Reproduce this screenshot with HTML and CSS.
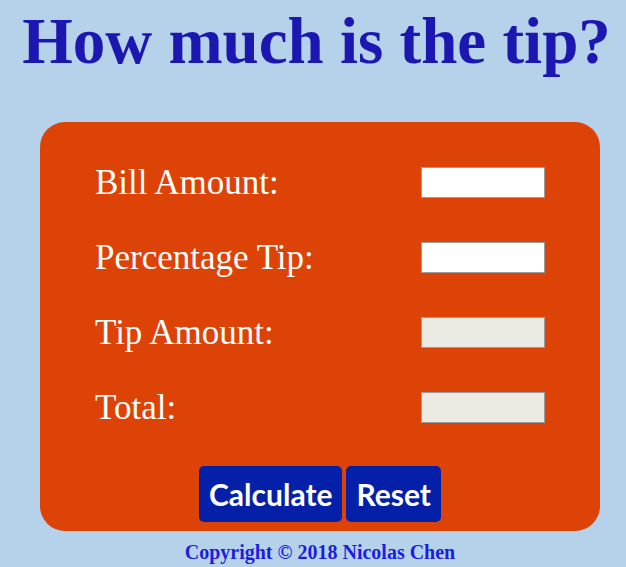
FILE: index.html
```html
<!DOCTYPE html>
<html>
<head>
<meta charset="utf-8">
<title>Tip Calculator</title>
<link rel="stylesheet" href="styles.css">
</head>
<body>
<h1 class="title">How much is the tip?</h1>
<div class="wrap">
  <div class="card">
    <div class="row"><label class="label">Bill Amount:</label><input class="field" type="text"></div>
    <div class="row"><label class="label">Percentage Tip:</label><input class="field" type="text"></div>
    <div class="row"><label class="label">Tip Amount:</label><input class="field field-off" type="text" disabled></div>
    <div class="row"><label class="label">Total:</label><input class="field field-off" type="text" disabled></div>
    <div class="actions">
      <button class="btn">Calculate</button>
      <button class="btn">Reset</button>
    </div>
  </div>
  <p class="copy">Copyright © 2018 Nicolas Chen</p>
</div>
</body>
</html>
```
FILE: styles.css
```css
html, body {
  margin: 0;
  padding: 0;
}
body {
  background: #b5d2ea;
  font-family: "Liberation Serif", "Times New Roman", serif;
  width: 626px;
  height: 567px;
  overflow: hidden;
}
.title {
  margin: 0;
  padding-top: 6px;
  padding-left: 7px;
  font-size: 65px;
  line-height: 70px;
  font-weight: bold;
  color: #1c17b0;
  text-align: center;
  white-space: nowrap;
}
.wrap {
  width: 560px;
  margin: 46px 0 0 40px;
}
.card {
  background: #dd4307;
  border-radius: 25px;
  padding: 23px 55px 9px;
}
.row {
  display: flex;
  justify-content: space-between;
  align-items: center;
  height: 75px;
}
.label {
  color: #fff;
  font-size: 35px;
}
.field {
  box-sizing: border-box;
  width: 124px;
  height: 31px;
  margin: 0;
  border: 1px solid #9c9c9c;
  background: #fff;
  padding: 0 4px;
}
.field-off {
  background: #ebebe4;
}
.actions {
  display: flex;
  justify-content: center;
  gap: 4px;
  margin-top: 21px;
}
.btn {
  font-family: Lato, sans-serif;
  font-weight: bold;
  font-size: 30px;
  color: #fff;
  background: #0520a8;
  border: none;
  border-radius: 5px;
  height: 56px;
  padding: 0 10px;
  margin: 0;
}
.copy {
  margin: 0;
  padding-top: 10px;
  text-align: center;
  font-size: 20px;
  line-height: 23px;
  font-weight: bold;
  color: #1d1de0;
}
```
